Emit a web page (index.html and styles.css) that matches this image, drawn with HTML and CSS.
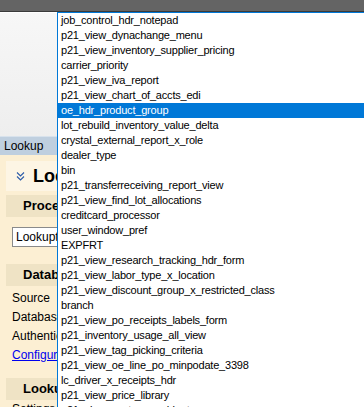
FILE: index.html
```html
<!DOCTYPE html>
<html>
<head>
<meta charset="utf-8">
<link rel="stylesheet" href="styles.css">
</head>
<body>
<div class="screen">
  <div class="titlebar"></div>
  <div class="toolbar"></div>
  <div class="leftcol">
    <div class="tabhead">Lookup</div>
    <div class="panel">
      <div class="heading">
        <svg class="chev" width="9" height="10" viewBox="0 0 9 10"><path d="M1 1.5 L4.5 5 L8 1.5 M1 5.5 L4.5 9 L8 5.5" fill="none" stroke="#2a5aa8" stroke-width="1.1"/></svg>
        <span>Lookup Tables</span>
      </div>
      <div class="band">Process</div>
      <div class="inputrow"><div class="input">Lookuptest</div></div>
      <div class="band">Database</div>
      <div class="props">
        <div class="prop">Source</div>
        <div class="prop">Database</div>
        <div class="prop">Authentication</div>
        <div class="prop"><a class="link">Configure</a></div>
      </div>
      <div class="band">Lookup</div>
      <div class="prop">Settings</div>
    </div>
  </div>

  <div class="dropdown">
    <div class="item">job_control_hdr_notepad</div>
    <div class="item">p21_view_dynachange_menu</div>
    <div class="item">p21_view_inventory_supplier_pricing</div>
    <div class="item">carrier_priority</div>
    <div class="item">p21_view_iva_report</div>
    <div class="item">p21_view_chart_of_accts_edi</div>
    <div class="item sel">oe_hdr_product_group</div>
    <div class="item">lot_rebuild_inventory_value_delta</div>
    <div class="item">crystal_external_report_x_role</div>
    <div class="item">dealer_type</div>
    <div class="item">bin</div>
    <div class="item">p21_transferreceiving_report_view</div>
    <div class="item">p21_view_find_lot_allocations</div>
    <div class="item">creditcard_processor</div>
    <div class="item">user_window_pref</div>
    <div class="item">EXPFRT</div>
    <div class="item">p21_view_research_tracking_hdr_form</div>
    <div class="item">p21_view_labor_type_x_location</div>
    <div class="item">p21_view_discount_group_x_restricted_class</div>
    <div class="item">branch</div>
    <div class="item">p21_view_po_receipts_labels_form</div>
    <div class="item">p21_inventory_usage_all_view</div>
    <div class="item">p21_view_tag_picking_criteria</div>
    <div class="item">p21_view_oe_line_po_minpodate_3398</div>
    <div class="item">lc_driver_x_receipts_hdr</div>
    <div class="item">p21_view_price_library</div>
    <div class="item">p21_view_customer_ship_to</div>
  </div>
</div>
</body>
</html>
```

FILE: styles.css
```css
html, body {
  margin: 0;
  padding: 0;
  background: #fcefd3;
}
.screen {
  position: relative;
  width: 364px;
  height: 407px;
  overflow: hidden;
  font-family: "Liberation Sans", Arial, sans-serif;
  color: #000;
}
.titlebar {
  height: 11px;
  background: #646464;
  border-bottom: 1px solid #3a3a3a;
}
.toolbar {
  height: 123px;
  background: linear-gradient(#f7f7f7, #eeeeee);
  border-top: 1px solid #ffffff;
}
.leftcol {
  width: 58px;
  overflow: hidden;
  white-space: nowrap;
}
.tabhead {
  height: 18px;
  line-height: 18px;
  background: #bfcfdf;
  border-top: 1px solid #d8e2ec;
  font-size: 12px;
  padding-left: 4px;
}
.panel {
  background: #fcefd3;
  padding: 6px 0 0 6px;
  height: 260px;
}
.heading {
  display: flex;
  align-items: center;
  height: 30px;
  background: #fdf5e4;
  padding-left: 10px;
  gap: 8px;
  font-size: 18px;
  font-weight: bold;
}
.chev { display: block; flex: none; }
.band {
  margin-top: 4px;
  height: 22px;
  line-height: 22px;
  background: #efe3c5;
  padding-left: 17px;
  font-size: 13px;
  font-weight: bold;
}
.inputrow {
  padding: 10px 0 13px 6px;
}
.input {
  height: 18px;
  line-height: 18px;
  border: 1px solid #8a8a8a;
  background: #fff;
  font-size: 12px;
  padding-left: 3px;
  width: 200px;
}
.props {
  padding-top: 3px;
  padding-bottom: 9px;
}
.prop {
  height: 19px;
  line-height: 19px;
  font-size: 12px;
  padding-left: 6px;
}
.link {
  color: #0000ee;
  text-decoration: underline;
}
.dropdown {
  position: absolute;
  left: 57px;
  top: 12px;
  width: 320px;
  height: 420px;
  background: #fff;
  border: 1px solid #0078d7;
  box-sizing: border-box;
}
.item {
  height: 15px;
  line-height: 15px;
  font-size: 11px;
  letter-spacing: -0.2px;
  padding-left: 3px;
  white-space: nowrap;
}
.item.sel {
  background: #0078d7;
  color: #fff;
}
```
